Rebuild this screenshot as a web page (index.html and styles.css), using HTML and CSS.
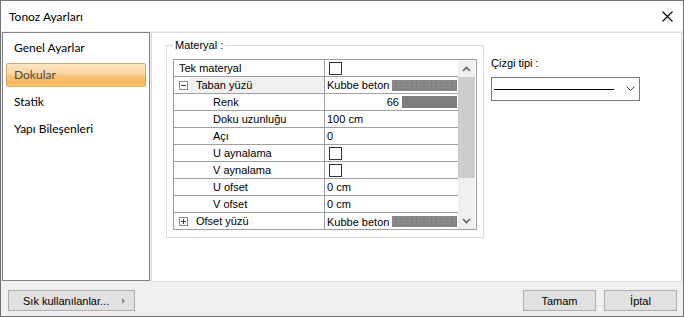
FILE: index.html
```html
<!DOCTYPE html>
<html lang="tr">

<head>
    <meta charset="UTF-8">
    <title>Tonoz Ayarları</title>
    <link rel="stylesheet" href="styles.css">
</head>

<body>
    <div class="window">
        <div class="titlebar">
            <span class="title">Tonoz Ayarları</span>
            <svg class="close" width="11" height="11" viewBox="0 0 11 11">
                <path d="M0.5 0.5 L10.5 10.5 M10.5 0.5 L0.5 10.5" stroke="#000" stroke-width="1.1" fill="none" />
            </svg>
        </div>

        <div class="content">
            <ul class="nav">
                <li>Genel Ayarlar</li>
                <li class="active">Dokular</li>
                <li>Statik</li>
                <li>Yapı Bileşenleri</li>
            </ul>

            <div class="main">
                <fieldset class="group">
                    <legend>Materyal :</legend>
                    <div class="grid">
                        <div class="rows">
                            <div class="row">
                                <div class="name">Tek materyal</div>
                                <div class="value"><span class="check"></span></div>
                            </div>
                            <div class="row cat">
                                <div class="name"><span class="expander minus"></span><span class="label shaded">Taban yüzü</span></div>
                                <div class="value">Kubbe beton<span class="swatch texture"></span></div>
                            </div>
                            <div class="row sub">
                                <div class="name">Renk</div>
                                <div class="value right">66<span class="swatch color"></span></div>
                            </div>
                            <div class="row sub">
                                <div class="name">Doku uzunluğu</div>
                                <div class="value">100 cm</div>
                            </div>
                            <div class="row sub">
                                <div class="name">Açı</div>
                                <div class="value">0</div>
                            </div>
                            <div class="row sub">
                                <div class="name">U aynalama</div>
                                <div class="value"><span class="check"></span></div>
                            </div>
                            <div class="row sub">
                                <div class="name">V aynalama</div>
                                <div class="value"><span class="check"></span></div>
                            </div>
                            <div class="row sub">
                                <div class="name">U ofset</div>
                                <div class="value">0 cm</div>
                            </div>
                            <div class="row sub">
                                <div class="name">V ofset</div>
                                <div class="value">0 cm</div>
                            </div>
                            <div class="row cat last">
                                <div class="name"><span class="expander plus"></span><span class="label">Ofset yüzü</span></div>
                                <div class="value">Kubbe beton<span class="swatch texture"></span></div>
                            </div>
                        </div>
                        <div class="scrollbar">
                            <div class="arrow">
                                <svg width="9" height="6" viewBox="0 0 9 6"><path d="M1 5 L4.5 1.5 L8 5" stroke="#606060" stroke-width="1.6" fill="none" /></svg>
                            </div>
                            <div class="thumb"></div>
                            <div class="track"></div>
                            <div class="arrow">
                                <svg width="9" height="6" viewBox="0 0 9 6"><path d="M1 1 L4.5 4.5 L8 1" stroke="#606060" stroke-width="1.6" fill="none" /></svg>
                            </div>
                        </div>
                    </div>
                </fieldset>

                <div class="side">
                    <div class="side-label">Çizgi tipi :</div>
                    <div class="combo">
                        <span class="line-sample"></span>
                        <svg width="9" height="6" viewBox="0 0 9 6"><path d="M0.5 0.5 L4.5 4.5 L8.5 0.5" stroke="#404040" stroke-width="1" fill="none" /></svg>
                    </div>
                </div>
            </div>
        </div>

        <div class="footer">
            <button class="btn favorites">Sık kullanılanlar...<span class="tri"></span></button>
            <div class="actions">
                <button class="btn">Tamam</button>
                <button class="btn">İptal</button>
            </div>
        </div>
    </div>
</body>

</html>
```

FILE: styles.css
```css
body {
    margin: 0;
    font-family: "Liberation Sans", Arial, sans-serif;
    font-size: 11px;
    color: #000;
    background-color: #fff;
}

.window {
    width: 684px;
    height: 317px;
    box-sizing: border-box;
    border: 1px solid #707070;
    background-color: #f0f0f0;
    display: flex;
    flex-direction: column;
}

.titlebar {
    height: 30px;
    flex: none;
    background-color: #fff;
    display: flex;
    align-items: center;
    justify-content: space-between;
    padding: 0 10px 0 8px;
    font-family: Lato, "Noto Sans", sans-serif;
    font-size: 12px;
}

.content {
    display: flex;
    gap: 1px;
    padding: 1px 1px 0 1px;
    height: 251px;
    flex: none;
}

/* left list */
.nav {
    list-style: none;
    margin: 0;
    width: 148px;
    height: 249px;
    box-sizing: border-box;
    padding: 3px;
    background-color: #fff;
    border: 1px solid #828282;
    font-family: Lato, "Noto Sans", sans-serif;
    font-size: 12px;
}

.nav li {
    height: 24px;
    line-height: 24px;
    padding-left: 8px;
    margin-bottom: 3px;
    box-sizing: border-box;
}

.nav li.active {
    color: #4a4a4a;
    border: 1px solid #d7a86a;
    border-radius: 2px;
    padding-left: 7px;
    line-height: 22px;
    background: linear-gradient(#fde5c4 0%, #fcd7a6 40%, #f9c67c 55%, #f7b454 88%, #fbcf92 100%);
}

/* main panel */
.main {
    width: 531px;
    height: 250px;
    box-sizing: border-box;
    background-color: #fff;
    border: 1px solid #dcdcdc;
    padding: 6px 0 0 14px;
    display: flex;
    align-items: flex-start;
}

.group {
    margin: 0;
    width: 318px;
    box-sizing: border-box;
    border: 1px solid #dcdcdc;
    padding: 7px 6px 7px 6px;
}

.group legend {
    padding: 0 2px;
    line-height: 13px;
}

.grid {
    display: flex;
    border: 1px solid #a0a0a0;
    height: 171px;
    box-sizing: border-box;
}

.rows {
    width: 284px;
}

.row {
    display: flex;
    height: 17px;
    box-sizing: border-box;
    border-bottom: 1px solid #a0a0a0;
    line-height: 16px;
}

.row.last {
    border-bottom: none;
}

.name {
    width: 151px;
    box-sizing: border-box;
    border-right: 1px solid #a0a0a0;
    padding-left: 5px;
    display: flex;
    align-items: center;
}

.row.sub .name {
    padding-left: 39px;
}

.label {
    flex: 1;
    align-self: stretch;
    padding-left: 6px;
}

.label.shaded {
    background-color: #f0f0f0;
}

.expander {
    width: 9px;
    height: 9px;
    box-sizing: border-box;
    border: 1px solid #8c8c8c;
    position: relative;
    margin-right: 2px;
    flex: none;
}

.expander::before {
    content: "";
    position: absolute;
    left: 1px;
    top: 3px;
    width: 5px;
    height: 1px;
    background-color: #404040;
}

.expander.plus::after {
    content: "";
    position: absolute;
    left: 3px;
    top: 1px;
    width: 1px;
    height: 5px;
    background-color: #404040;
}

.value {
    flex: 1;
    display: flex;
    align-items: center;
    padding-left: 2px;
}

.value.right {
    justify-content: flex-end;
}

.check {
    width: 13px;
    height: 13px;
    box-sizing: border-box;
    border: 1px solid #333;
    margin-left: 2px;
}

.swatch {
    margin-left: auto;
    margin-right: 1px;
    height: 11px;
    background-color: #858585;
}

.swatch.texture {
    width: 65px;
    background-image: radial-gradient(#929292 1px, transparent 1px), radial-gradient(#777 1px, transparent 1px);
    background-size: 4px 3px, 5px 4px;
    background-position: 0 0, 2px 1px;
}

.swatch.color {
    margin-left: 3px;
    width: 55px;
    height: 12px;
    background-color: #7d7d7d;
}

.scrollbar {
    width: 17px;
    display: flex;
    flex-direction: column;
    background-color: #f0f0f0;
}

.arrow {
    height: 17px;
    display: flex;
    align-items: center;
    justify-content: center;
}

.thumb {
    height: 101px;
    background-color: #cdcdcd;
}

.track {
    flex: 1;
}

/* right side */
.side {
    margin-left: 7px;
    padding-top: 18px;
}

.side-label {
    line-height: 13px;
}

.combo {
    margin-top: 7px;
    width: 149px;
    height: 24px;
    box-sizing: border-box;
    border: 1px solid #7a7a7a;
    display: flex;
    align-items: center;
    padding: 0 4px 0 2px;
    gap: 12px;
}

.line-sample {
    width: 121px;
    height: 1px;
    background-color: #000;
}

/* bottom buttons */
.footer {
    display: flex;
    justify-content: space-between;
    padding: 7px 6px 0 7px;
}

.actions {
    display: flex;
    gap: 8px;
}

.btn {
    height: 21px;
    width: 73px;
    padding: 0;
    font-family: "Liberation Sans", Arial, sans-serif;
    font-size: 11px;
    color: #000;
    background-color: #e1e1e1;
    border: 1px solid #adadad;
}

.btn.favorites {
    width: 127px;
    text-align: left;
    padding-left: 14px;
    display: flex;
    align-items: center;
}

.tri {
    margin-left: auto;
    margin-right: 9px;
    width: 0;
    height: 0;
    border-top: 3px solid transparent;
    border-bottom: 3px solid transparent;
    border-left: 3px solid #8a8a8a;
}
```
